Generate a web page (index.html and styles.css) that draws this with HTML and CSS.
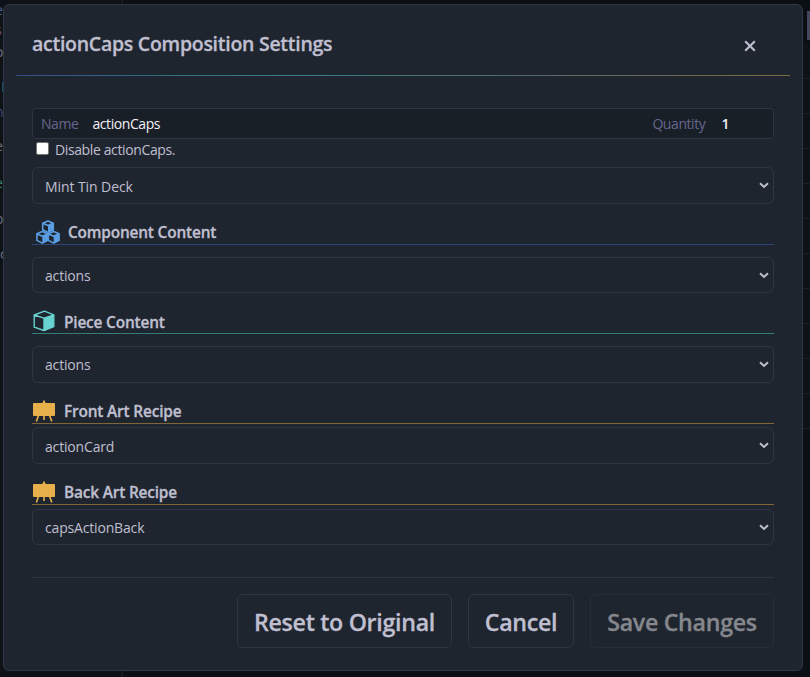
FILE: index.html
```html
<!DOCTYPE html>
<html lang="en">
<head>
<meta charset="utf-8">
<title>Composition Settings</title>
<link rel="stylesheet" href="styles.css">
</head>
<body>
<svg class="defs" width="0" height="0" aria-hidden="true">
  <symbol id="cube" viewBox="0 0 22 22">
    <path d="M1.2 5 11.5 1.2 20.8 4.8V16.5L11 20.5 1.2 17.2ZM1.2 5 11 8.2 20.8 4.8M11 8.2V20.5" fill="none" stroke="currentColor" stroke-width="1.4" stroke-linejoin="round"/>
    <path d="M11 8.2 20.8 4.8V16.5L11 20.5Z" fill="currentColor"/>
  </symbol>
  <symbol id="cubes" viewBox="0 0 24 24">
    <g fill="none" stroke="currentColor" stroke-width="1.6" stroke-linejoin="round">
      <path d="M6.7 3.2 12 .9 17.3 3.2V9.8L12 12.4 6.7 9.8ZM6.7 3.2 12 5.6 17.3 3.2"/>
      <path d="M.9 13.8 6.3 11.5 11.7 13.8V20.4L6.3 23.1.9 20.4ZM.9 13.8 6.3 16.3 11.7 13.8"/>
      <path d="M12.3 13.8 17.7 11.5 23.1 13.8V20.4L17.7 23.1 12.3 20.4ZM12.3 13.8 17.7 16.3 23.1 13.8"/>
    </g>
    <path fill="currentColor" d="M12 5.6 17.3 3.2V9.8L12 12.4ZM6.3 16.3 11.7 13.8V20.4L6.3 23.1ZM17.7 16.3 23.1 13.8V20.4L17.7 23.1Z"/>
  </symbol>
  <symbol id="easel" viewBox="0 0 22 22">
    <rect y="3" width="22" height="13" rx="1" fill="currentColor"/>
    <path d="M11 .4V4M5.6 15 3.4 21.4M11 15V20M16.4 15 18.8 21.4" stroke="currentColor" stroke-width="1.6" fill="none"/>
    <path d="M9 3.2 11 .7 13 3.2Z" fill="currentColor"/>
  </symbol>
  <symbol id="chevron" viewBox="0 0 10 7">
    <path d="M1 1.2 5 4.9 9 1.2" fill="none" stroke="currentColor" stroke-width="2"/>
  </symbol>
</svg>
<div class="backdrop">
  <div class="side"><i class="c1">e</i><i class="c2">s</i><i class="c3">o</i><b class="mark"></b><i class="c5">n</i><i class="c6">e</i><i class="c7">e</i><i class="c8">o</i><i class="c9">c</i></div>
  <div class="rows"></div>
  <div class="thumb"></div>
</div>
<div class="modal">
  <header class="header">
    <h1 class="title"><span>actionCaps Composition Settings</span></h1>
    <svg class="close" viewBox="0 0 12 12"><path d="M1.2 1.2 10.8 10.8M10.8 1.2 1.2 10.8" stroke="currentColor" stroke-width="2.1"/></svg>
  </header>
  <main class="body">
    <div class="fields">
      <span class="label name-label">Name</span><span class="value name">actionCaps</span>
      <span class="label quantity-label">Quantity</span><span class="value quantity">1</span>
    </div>
    <label class="disable"><span class="box"></span><span class="text">Disable actionCaps.</span></label>
    <div class="select type"><span>Mint Tin Deck</span><svg><use href="#chevron"/></svg></div>
    <h2 class="section component"><svg class="wide"><use href="#cubes"/></svg><span>Component Content</span></h2>
    <div class="select short"><span>actions</span><svg><use href="#chevron"/></svg></div>
    <h2 class="section piece"><svg><use href="#cube"/></svg><span>Piece Content</span></h2>
    <div class="select raised"><span>actions</span><svg><use href="#chevron"/></svg></div>
    <h2 class="section art"><svg><use href="#easel"/></svg><span>Front Art Recipe</span></h2>
    <div class="select"><span>actionCard</span><svg><use href="#chevron"/></svg></div>
    <h2 class="section art back"><svg><use href="#easel"/></svg><span>Back Art Recipe</span></h2>
    <div class="select short"><span>capsActionBack</span><svg><use href="#chevron"/></svg></div>
  </main>
  <footer class="footer">
    <button class="reset">Reset to Original</button>
    <button class="cancel">Cancel</button>
    <button class="save" disabled>Save Changes</button>
  </footer>
</div>
</body>
</html>
```
FILE: styles.css
```css
* { box-sizing: border-box; }
body {
  margin: 0;
  width: 810px;
  height: 677px;
  overflow: hidden;
  background: #0b0f13;
  color: #bfbfcf;
  font-family: "Open Sans", "Noto Sans", sans-serif;
  font-size: 14px;
}
.defs { position: absolute; }
.backdrop { position: absolute; inset: 0; overflow: hidden; }
.side {
  position: absolute;
  left: 0;
  top: 0;
  width: 123px;
  height: 677px;
  background: #0e1217;
  border-right: 1px solid #1d2228;
}
.side i { position: absolute; left: -5px; font-style: normal; font-size: 14px; line-height: 14px; color: #707080; }
.side .c1 { top: 3px; color: #45608a; }
.side .c2 { top: 23px; color: #754f9c; }
.side .c3 { top: 45px; }
.side .mark { position: absolute; left: 2px; top: 82px; width: 2px; height: 10px; background: #174c68; }
.side .c5 { top: 105px; color: #414c7d; }
.side .c6 { top: 139px; }
.side .c7 { top: 176px; color: #39836f; }
.side .c8 { top: 212px; }
.side .c9 { top: 247px; left: 0; }
.rows {
  position: absolute;
  right: 0;
  top: 44px;
  width: 8px;
  height: 385px;
  background: repeating-linear-gradient(#0e1216 0 34px, #1b2026 34px 35px);
}
.thumb { position: absolute; right: 0; top: 11px; width: 3px; height: 29px; background: #44465e; }

.modal {
  position: relative;
  display: flex;
  flex-direction: column;
  margin: 4px 0 0 3px;
  width: 800px;
  height: 667px;
  border: 1px solid #2d3848;
  border-radius: 6px;
  background: #1f252f;
}
.header {
  display: flex;
  justify-content: space-between;
  align-items: center;
  height: 71px;
  margin: 0 12px;
  padding: 0 34px 0 16px;
  flex: none;
  background: linear-gradient(90deg, #305287, #397f87 35%, #526c6c 65%, #806a40) bottom / 100% 1px no-repeat;
}
.title { margin: 7px 0 0; font-size: 19.5px; font-weight: 600; line-height: 28px; letter-spacing: -0.27px; white-space: nowrap; }
.close { width: 12px; height: 12px; margin-top: 11px; }
.title, .section span, button { -webkit-text-stroke: 0.3px currentColor; }

.body { display: flex; flex-direction: column; padding: 32px 28px 0; }
.fields {
  display: flex;
  align-items: center;
  height: 31px;
  padding: 0 44px 1px 8px;
  border: 1px solid #2d3544;
  border-radius: 4px;
  background: #191f26;
  letter-spacing: -0.42px;
}
.label { color: #66668e; }
.value { color: #f0f0f8; }
.name { margin-left: 14px; }
.quantity-label { margin-left: auto; }
.quantity { margin-left: 16px; font-weight: 600; }
.disable { display: flex; height: 28px; padding: 3px 0 0 4px; letter-spacing: -0.38px; }
.box { width: 13px; height: 13px; border: 1px solid #767676; border-radius: 2px; background: #fff; }
.text { margin-left: 6px; line-height: 15px; }
.select {
  display: flex;
  justify-content: space-between;
  align-items: center;
  height: 37px;
  padding: 2px 4px 0 12px;
  border: 1px solid #2d3646;
  border-radius: 6px;
  letter-spacing: -0.17px;
}
.type { letter-spacing: -0.08px; }
.select.short span, .select.raised span { margin-top: -2px; }
.select.short { height: 36px; }
.select svg { width: 10px; height: 7px; margin-top: -2px; }
.section {
  display: flex;
  align-items: center;
  height: 41px;
  margin: 0 0 12px;
  padding: 17px 0 0 1px;
  border-bottom: 1px solid #2e457a;
  font-size: 15.4px;
  font-weight: 600;
  line-height: 20px;
  letter-spacing: -0.17px;
}
.section span { margin-top: 1px; }
.section svg { width: 22px; height: 22px; margin: -1px 9px 0 0; color: #67d2cf; flex: none; }
.section .wide { width: 24px; height: 24px; margin: -2px 8px 0 3px; color: #5a9de2; }
.piece { border-color: #317d79; }
.piece span { margin-top: 2px; }
.art { border-color: #7f6637; margin-bottom: 3px; }
.section.art svg { color: #e8b04b; margin-top: -2px; }
.section.art span { margin-top: 0; }
.back { margin-bottom: 4px; }

.footer {
  display: flex;
  justify-content: flex-end;
  gap: 16px;
  margin: 32px 28px 0;
  padding-top: 16px;
  border-top: 1px solid #2d3544;
}
button {
  height: 54px;
  padding: 1px 0 0;
  border: 1px solid #2d3544;
  border-radius: 6px;
  background: none;
  color: #bfbfcf;
  font: 600 23.2px/30px "Open Sans", "Noto Sans", sans-serif;
  letter-spacing: -0.3px;
  white-space: nowrap;
}
.reset { width: 215px; }
.cancel { width: 106px; }
.save { width: 184px; border-color: #272d39; color: #85878d; }
```
